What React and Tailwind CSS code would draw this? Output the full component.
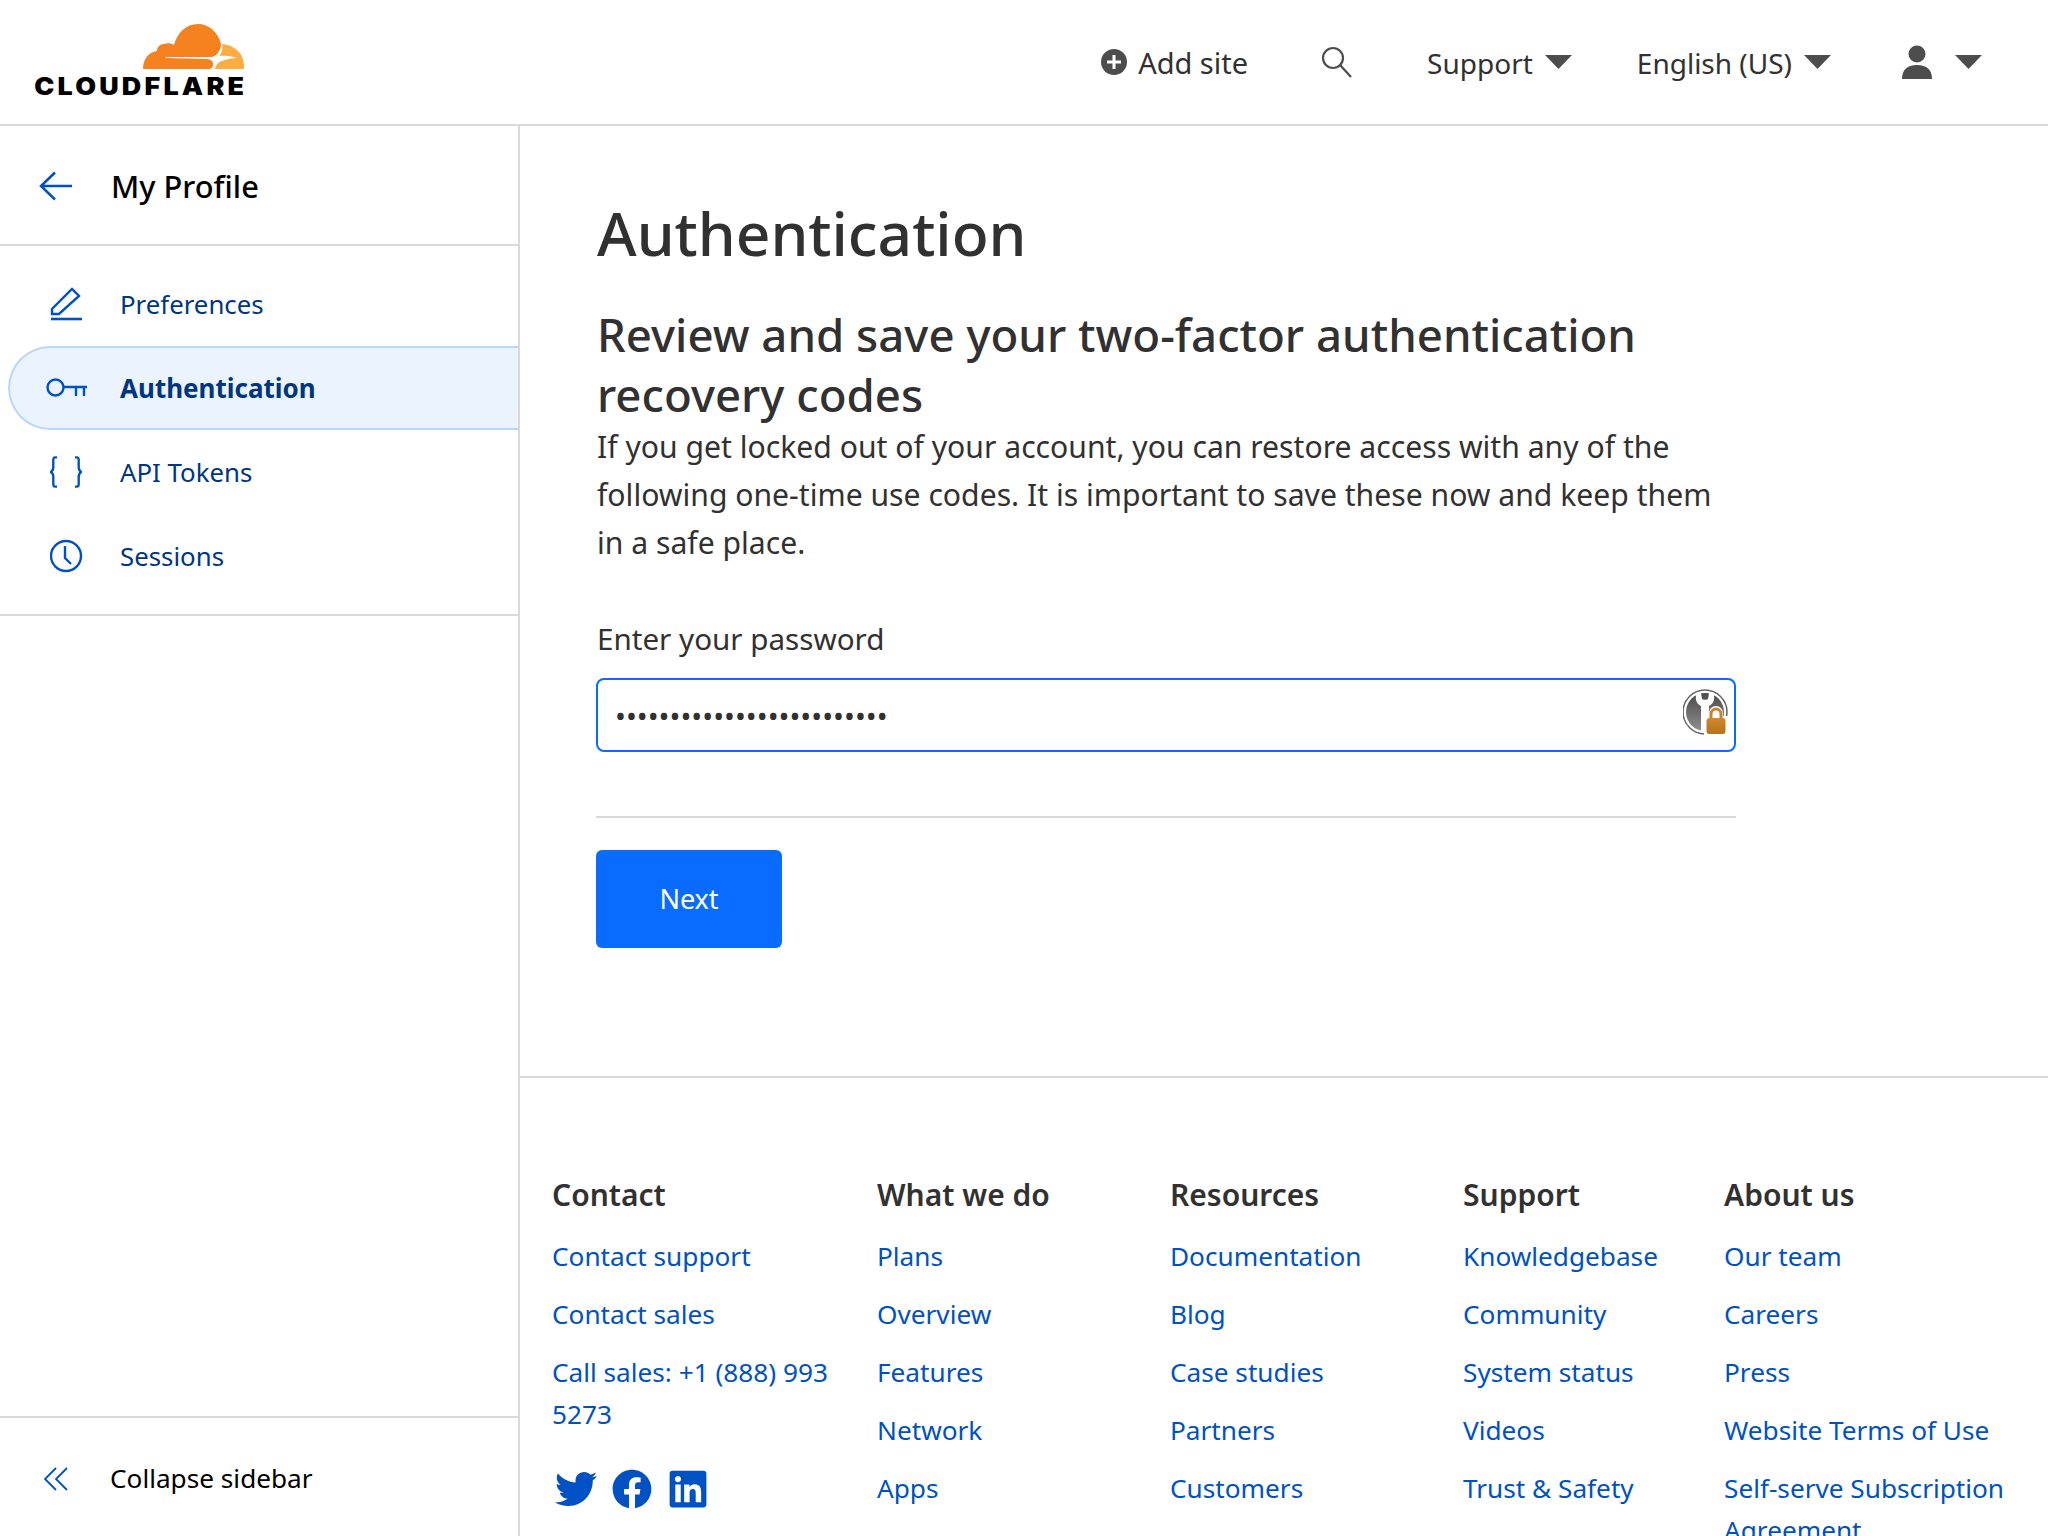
import React from 'react';
import { FaTwitter, FaFacebook, FaLinkedin } from 'react-icons/fa';

const footerColumns = [
  { title: 'Contact', width: 'w-[325px]', links: ['Contact support', 'Contact sales', 'Call sales: +1 (888) 993 5273'] },
  { title: 'What we do', width: 'w-[293px]', links: ['Plans', 'Overview', 'Features', 'Network', 'Apps'] },
  { title: 'Resources', width: 'w-[293px]', links: ['Documentation', 'Blog', 'Case studies', 'Partners', 'Customers'] },
  { title: 'Support', width: 'w-[261px]', links: ['Knowledgebase', 'Community', 'System status', 'Videos', 'Trust & Safety'] },
  { title: 'About us', width: 'w-[324px]', links: ['Our team', 'Careers', 'Press', 'Website Terms of Use', 'Self-serve Subscription Agreement'] },
];

function Logo() {
  return (
    <div className="flex flex-col items-end w-[212px]">
      <svg width="102" height="46" viewBox="143 23 102 46">
        <path fill="#f6821f" d="M143 68c0-9 5-17 14-18 0-4 3-7 7-7 3-1 7-1 10 1 3-12 12-21 24-21 11 0 20 8 23 20 0 3-1 6-2 7-1 3-4 5-7 6h-46c-1 0-1 1 0 1l42 1c4 1 6 4 5 7-1 1-1 2-3 3z" />
        <path fill="#fbad41" d="M222 43c12 1 22 9 22 22v3h-29c1-4 3-7 7-8 5-2 11-3 15-3-3-1-10-3-18-2 3-3 4-8 3-12z" />
      </svg>
      <span className="font-['Inter',sans-serif] font-black text-[24px] leading-[26px] tracking-[0.12em] text-black mr-[-2px] mt-[4px] scale-x-[1.12] origin-right whitespace-nowrap">CLOUDFLARE</span>
    </div>
  );
}

function Caret() {
  return (
    <svg width="27" height="16" viewBox="0 0 27 16" className="fill-[#4d4d4d]">
      <path d="M0 1h27L13.500 15z" />
    </svg>
  );
}

function NavItem({ icon, label, active }) {
  return (
    <div className={`flex items-center h-[84px] ${active ? 'ml-[8px] bg-[#ebf3fe] border-2 border-r-0 border-[#b9d6fb] rounded-l-[42px]' : ''}`}>
      <div className={`flex shrink-0 ${active ? 'w-[110px] pl-[36px]' : 'w-[120px] pl-[50px]'}`}>{icon}</div>
      <span className={active ? 'text-[26px] font-bold text-[#003681]' : 'text-[25.800px] text-[#003681]'}>{label}</span>
    </div>
  );
}

function Sidebar() {
  return (
    <aside className="w-[520px] shrink-0 border-r-2 border-[#d9d9d9] flex flex-col">
      <div className="flex items-center h-[120px] pt-[2px] border-b-2 border-[#d9d9d9] shrink-0">
        <svg width="34" height="30" viewBox="0 0 34 30" className="ml-[39px] mr-[38px] stroke-[#0051c3] fill-none" strokeWidth="2.500">
          <path d="M33 15H2M16 1.500 2 15l14 13.500" />
        </svg>
        <span className="text-[30.800px] font-medium text-black">My Profile</span>
      </div>
      <nav className="py-[16px] border-b-2 border-[#d9d9d9] shrink-0 h-[370px]">
        <NavItem label="Preferences" icon={
          <svg width="32" height="34" viewBox="0 0 32 34" className="stroke-[#0051c3] fill-none" strokeWidth="2.400">
            <path d="M2 26v-4L22 2l7 7L9 27H2z" />
            <path d="M1 32h31" strokeWidth="2.600" />
          </svg>
        } />
        <NavItem active label="Authentication" icon={
          <svg width="42" height="20" viewBox="0 0 42 20" className="stroke-[#0051c3] fill-none" strokeWidth="2.400">
            <circle cx="9.500" cy="9.500" r="8" />
            <path d="M17 9h24M30 9v9M38 9v9" />
          </svg>
        } />
        <NavItem label="API Tokens" icon={
          <svg width="32" height="32" viewBox="0 0 34 34" className="stroke-[#0051c3] fill-none" strokeWidth="2.500">
            <path d="M7.500 1.500H5.500c-1.500 0-2 1-2 2.500v8c0 3-1 4-2.500 5 1.500 1 2.500 2 2.500 5v8c0 1.500.5 2.500 2 2.500h2" />
            <path d="M26.500 1.500h2c1.500 0 2 1 2 2.500v8c0 3 1 4 2.500 5-1.500 1-2.500 2-2.500 5v8c0 1.500-.5 2.500-2 2.500h-2" />
          </svg>
        } />
        <NavItem label="Sessions" icon={
          <svg width="34" height="34" viewBox="0 0 34 34" className="stroke-[#0051c3] fill-none" strokeWidth="2.400">
            <circle cx="16" cy="17" r="15" />
            <path d="M15 7v12l6 6" />
          </svg>
        } />
      </nav>
      <div className="flex-1" />
      <div className="flex items-center h-[120px] pt-[3px] border-t-2 border-[#d9d9d9] shrink-0">
        <svg width="24" height="24" viewBox="0 0 24 24" className="ml-[44px] mr-[42px] stroke-[#0051c3] fill-none" strokeWidth="1.800">
          <path d="M12 1 1 12l11 11M23 1 12 12l11 11" />
        </svg>
        <span className="text-[26.200px] text-black">Collapse sidebar</span>
      </div>
    </aside>
  );
}

function VaultIcon() {
  return (
    <svg width="48" height="48" viewBox="0 0 48 48" className="absolute right-[5px] top-[11px]">
      <defs>
        <linearGradient id="vaultGrey" x1="0" y1="0" x2="0" y2="1">
          <stop offset="0" stopColor="#4a4a4a" />
          <stop offset="1" stopColor="#8f8f8f" />
        </linearGradient>
        <linearGradient id="vaultLock" x1="0" y1="0" x2="0" y2="1">
          <stop offset="0" stopColor="#d08a2c" />
          <stop offset="1" stopColor="#b5721d" />
        </linearGradient>
      </defs>
      <circle cx="22" cy="23" r="22" fill="#fff" stroke="#666" strokeWidth="1.500" />
      <circle cx="22" cy="23" r="19" fill="url(#vaultGrey)" />
      <path fill="#fff" d="M14 4h4l1 6c1 1 5 1 6 0l1-6h4c2 4 2 10-4 13v25h-8V17c-6-3-6-9-4-13z" />
      <path fill="#fff" d="M21 46V27h5v-3a7 7 0 0 1 14 0v3h5v19z" />
      <rect x="23.500" y="29" width="19" height="16" rx="3" fill="url(#vaultLock)" />
      <path d="M28 30v-5a5 5 0 0 1 10 0v5" fill="none" stroke="#c9832a" strokeWidth="3" />
    </svg>
  );
}

function Footer() {
  return (
    <footer className="border-t-2 border-[#d9d9d9] pl-[32px] pt-[95px] flex">
      {footerColumns.map((col) => (
        <div key={col.title} className={`${col.width} shrink-0 pr-[20px]`}>
          <h4 className="text-[30px] font-semibold leading-[44px] text-[#313131] mb-[18px]">{col.title}</h4>
          <ul className="flex flex-col gap-[16px]">
            {col.links.map((link) => (
              <li key={link} className="text-[26.200px] leading-[42px] text-[#0051c3]">{link}</li>
            ))}
          </ul>
          {col.title === 'Contact' && (
            <div className="flex items-center gap-[15px] mt-[33px] ml-[3px] text-[#0051c3]">
              <FaTwitter className="w-[42px] h-[42px]" />
              <FaFacebook className="w-[40px] h-[40px]" />
              <FaLinkedin className="w-[42px] h-[42px]" />
            </div>
          )}
        </div>
      ))}
    </footer>
  );
}

export default function App() {
  return (
    <div className="h-[1536px] overflow-hidden flex flex-col bg-white font-['Noto_Sans',sans-serif] text-[#313131]">
      <header className="h-[126px] shrink-0 border-b-2 border-[#d9d9d9] flex items-center justify-between pl-[33px] pr-[66px]">
        <Logo />
        <div className="flex items-center text-[28px]">
          <svg width="26" height="26" viewBox="0 0 26 26" className="mr-[11px]">
            <circle cx="13" cy="13" r="13" fill="#4d4d4d" />
            <path d="M13 6v14M6 13h14" stroke="#fff" strokeWidth="3" />
          </svg>
          <span className="text-[29px] pt-[2px]">Add site</span>
          <svg width="32" height="32" viewBox="0 0 32 32" className="ml-[73px] mr-[74px] stroke-[#4d4d4d] fill-none" strokeWidth="2.200">
            <circle cx="12" cy="12" r="10" />
            <path d="m19 19 11 12" />
          </svg>
          <span className="mr-[12px] pt-[2px]">Support</span>
          <Caret />
          <span className="ml-[65px] mr-[12px] pt-[2px]">English (US)</span>
          <Caret />
          <svg width="32" height="34" viewBox="0 0 32 34" className="ml-[70px] mr-[22px] fill-[#4d4d4d]">
            <circle cx="16" cy="9" r="8.500" />
            <path d="M1 34c0-9 5-14 15-14s15 5 15 14z" />
          </svg>
          <Caret />
        </div>
      </header>
      <div className="flex flex-1 min-h-0">
        <Sidebar />
        <main className="flex-1 min-w-0 overflow-hidden">
          <section className="h-[950px] pl-[77px] pt-[62px]">
            <div className="w-[1140px]">
              <h1 className="text-[60.500px] leading-[90px] font-medium text-[#313131]">Authentication</h1>
              <h2 className="text-[45.600px] leading-[60px] font-[550] text-[#313131] mt-[26px]">Review and save your two-factor authentication recovery codes</h2>
              <p className="text-[30.150px] leading-[48px] mt-[-1px] text-[#313131]">If you get locked out of your account, you can restore access with any of the following one-time use codes. It is important to save these now and keep them in a safe place.</p>
              <label className="block text-[29.600px] leading-[44px] mt-[50px]">Enter your password</label>
              <div className="-ml-[1px] mr-[1px]">
                <div className="relative mt-[17px]">
                  <input type="password" readOnly value="xxxxxxxxxxxxxxxxxxxxxxxxx" className="w-full h-[74px] border-2 border-[#0a6cff] rounded-[8px] px-[17px] text-[29px] outline-none text-[#313131]" />
                  <VaultIcon />
                </div>
                <div className="border-t-2 border-[#d9d9d9] mt-[64px]" />
                <button className="mt-[32px] w-[186px] h-[98px] bg-[#0a6cff] rounded-[6px] text-white text-[27px]">Next</button>
              </div>
            </div>
          </section>
          <Footer />
        </main>
      </div>
    </div>
  );
}
